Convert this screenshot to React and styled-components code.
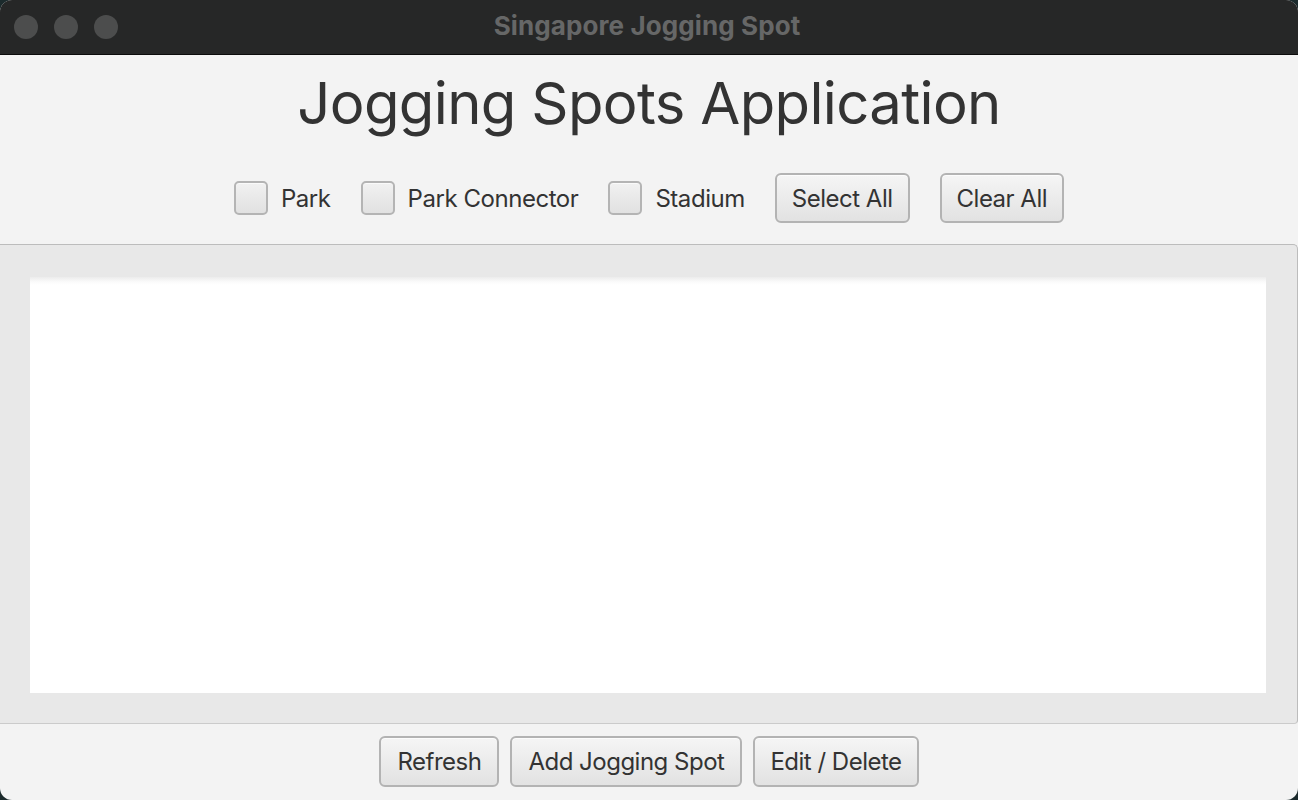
import React from "react";
import styled, { createGlobalStyle } from "styled-components";

const Global = createGlobalStyle`
  html, body { margin: 0; padding: 0; }
  body {
    background: #1b2a2c;
    font-family: Inter, "Noto Sans", sans-serif;
  }
`;

const Window = styled.div`
  width: 1298px;
  height: 800px;
  display: flex;
  flex-direction: column;
  border-radius: 12px;
  overflow: hidden;
  background: #f3f3f3;
`;

const TitleBar = styled.div`
  height: 54px;
  flex: none;
  background: #262727;
  border-bottom: 1px solid #0c0c0c;
  display: flex;
  align-items: center;
  position: relative;
`;

const Lights = styled.div`
  display: flex;
  gap: 16px;
  padding-left: 14px;
`;

const Light = styled.span`
  width: 24px;
  height: 24px;
  border-radius: 50%;
  background: #4c4d4d;
`;

const WindowTitle = styled.div`
  position: absolute;
  left: 0;
  right: 0;
  top: 0;
  bottom: 0;
  display: flex;
  align-items: center;
  justify-content: center;
  font-weight: 700;
  font-size: 26px;
  color: #666767;
  letter-spacing: 0.1px;
  padding-bottom: 4px;
  padding-right: 4px;
`;

const Content = styled.div`
  flex: 1;
  display: flex;
  flex-direction: column;
  color: #333;
`;

const Heading = styled.h1`
  margin: 12px 0 0;
  font-weight: 400;
  font-size: 58px;
  line-height: 72px;
  text-align: center;
  color: #333;
  letter-spacing: -0.65px;
`;

const FilterRow = styled.div`
  margin-top: 34px;
  height: 50px;
  display: flex;
  align-items: center;
  justify-content: center;
  gap: 30px;
`;

const CheckLabel = styled.label`
  display: flex;
  align-items: center;
  gap: 13px;
  font-size: 24px;
  letter-spacing: -0.45px;
  color: #333;
`;

const Box = styled.span`
  width: 30px;
  height: 30px;
  border: 2px solid #b4b4b4;
  border-radius: 5px;
  background: linear-gradient(#f1f1f1, #e1e1e1);
  box-shadow: inset 0 1px 0 #fafafa;
`;

const Button = styled.button`
  height: ${(p) => p.$h || 50}px;
  padding: 0 ${(p) => p.$px || 15}px;
  border: 2px solid #b3b3b3;
  border-radius: 6px;
  background: linear-gradient(#f5f5f5, #e2e2e2);
  font-family: Inter, "Noto Sans", sans-serif;
  font-size: 24px;
  letter-spacing: -0.5px;
  color: #333;
  box-shadow: inset 0 1px 0 #fcfcfc;
`;

const Panel = styled.div`
  margin-top: 21px;
  background: #e8e8e8;
  border: 1px solid #bcbcbc;
  border-left: none;
  border-bottom-color: #cbcbcb;
  border-radius: 0 5px 4px 0;
  padding: 32px 31px 30px 30px;
  box-sizing: border-box;
  height: 480px;
  display: flex;
`;

const ListArea = styled.div`
  flex: 1;
  background: linear-gradient(#ececec, #fbfbfb 5px, #ffffff 8px);
`;

const BottomBar = styled.div`
  margin-top: 12px;
  display: flex;
  justify-content: center;
  gap: 11px;
`;

export default function App() {
  return (
    <>
      <Global />
      <Window>
        <TitleBar>
          <Lights>
            <Light />
            <Light />
            <Light />
          </Lights>
          <WindowTitle>Singapore Jogging Spot</WindowTitle>
        </TitleBar>
        <Content>
          <Heading>Jogging Spots Application</Heading>
          <FilterRow>
            <CheckLabel>
              <Box />
              Park
            </CheckLabel>
            <CheckLabel>
              <Box />
              Park Connector
            </CheckLabel>
            <CheckLabel>
              <Box />
              Stadium
            </CheckLabel>
            <Button>Select All</Button>
            <Button>Clear All</Button>
          </FilterRow>
          <Panel>
            <ListArea />
          </Panel>
          <BottomBar>
            <Button $h={51} $px={16}>Refresh</Button>
            <Button $h={51} $px={16}>Add Jogging Spot</Button>
            <Button $h={51} $px={15}>Edit / Delete</Button>
          </BottomBar>
        </Content>
      </Window>
    </>
  );
}
